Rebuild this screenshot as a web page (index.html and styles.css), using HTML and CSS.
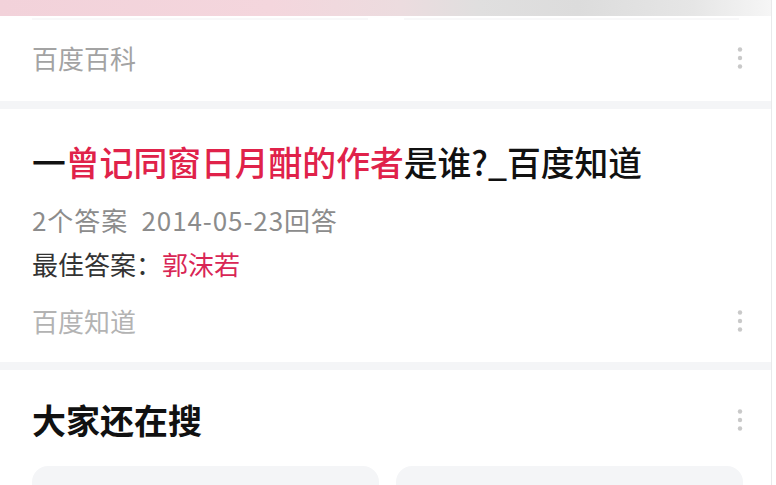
FILE: index.html
```html
<!DOCTYPE html>
<html>
<head>
  <meta charset="utf-8">
  <title>曾记同窗日月酣的作者是谁</title>
  <link rel="stylesheet" href="styles.css">
</head>
<body>
  <div class="page">
    <div class="top-band"></div>

    <div class="card card-first">
      <div class="prev-edges"><span></span><span></span></div>
      <div class="source-row">
        <span class="source">百度百科</span>
        <svg class="kebab" width="6" height="22" viewBox="0 0 6 22"><circle cx="3" cy="2.5" r="2.2"/><circle cx="3" cy="11" r="2.2"/><circle cx="3" cy="19.5" r="2.2"/></svg>
      </div>
    </div>

    <div class="card card-answer">
      <div class="title">一<em>曾记同窗日月酣的作者</em>是谁?_百度知道</div>
      <div class="meta">2个答案&nbsp;&nbsp;2014-05-23回答</div>
      <div class="best">最佳答案：<em>郭沫若</em></div>
      <div class="source-row">
        <span class="source light">百度知道</span>
        <svg class="kebab" width="6" height="22" viewBox="0 0 6 22"><circle cx="3" cy="2.5" r="2.2"/><circle cx="3" cy="11" r="2.2"/><circle cx="3" cy="19.5" r="2.2"/></svg>
      </div>
    </div>

    <div class="card card-related">
      <div class="related-head">
        <span class="related-title">大家还在搜</span>
        <svg class="kebab" width="6" height="22" viewBox="0 0 6 22"><circle cx="3" cy="2.5" r="2.2"/><circle cx="3" cy="11" r="2.2"/><circle cx="3" cy="19.5" r="2.2"/></svg>
      </div>
      <div class="related-grid">
        <div class="related-item"></div>
        <div class="related-item"></div>
      </div>
    </div>
  </div>
</body>
</html>
```

FILE: styles.css
```css
html { background: #fff; }
body { margin: 0; font-family: "Noto Sans CJK SC", "Noto Sans", sans-serif; overflow: hidden; }
.page { width: 771px; height: 485px; overflow: hidden; border-right: 1px solid #e9e9eb; background: #f4f5f7; }

.top-band { height: 16px; background: linear-gradient(90deg, #f2d2da 0%, #f4d6dd 35%, #ecdcdf 52%, #e0dfdf 62%, #dcdcdc 75%, #e6e6e6 90%, #f6f6f6 100%); }

.card { background: #fff; padding: 0 28px 0 32px; }
.card-first { height: 85px; margin-bottom: 8px; }
.prev-edges { display: flex; gap: 36px; height: 2px; padding: 2px 4px 0 0; margin-bottom: 20px; }
.prev-edges span { flex: 1; background: #f8f8f9; }

.source-row { display: flex; align-items: center; justify-content: space-between; height: 36px; }
.source { font-size: 26px; line-height: 36px; color: #a3a3a3; }
.source.light { color: #b3b3b3; }
.kebab { fill: #c9c9c9; }

.card-answer { height: 253px; padding-top: 31px; box-sizing: border-box; margin-bottom: 8px; }
.title { font-size: 33.8px; line-height: 44px; font-weight: 500; color: #111; white-space: nowrap; }
.title em, .best em { font-style: normal; color: #e0224a; }
.meta { margin-top: 18px; font-size: 26px; line-height: 36px; color: #8c8c8c; letter-spacing: 0.9px; }
.best { margin-top: 8px; font-size: 26px; line-height: 36px; color: #333; }
.best em { color: #d92655; }
.card-answer .source-row { margin-top: 21px; }

.card-related { padding-top: 28px; height: 200px; }
.related-head { display: flex; align-items: center; justify-content: space-between; height: 44px; }
.related-title { font-size: 34px; line-height: 44px; font-weight: 700; color: #111; }
.related-grid { display: grid; grid-template-columns: 1fr 1fr; gap: 17px; margin-top: 24px; }
.related-item { height: 80px; background: #f4f5f7; border-radius: 16px; }
```
